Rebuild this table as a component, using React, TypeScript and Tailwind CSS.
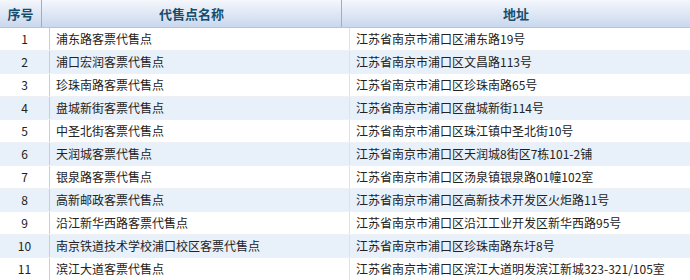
import React from "react";

const outlets = [
  { name: "浦东路客票代售点", addr: "江苏省南京市浦口区浦东路19号" },
  { name: "浦口宏润客票代售点", addr: "江苏省南京市浦口区文昌路113号" },
  { name: "珍珠南路客票代售点", addr: "江苏省南京市浦口区珍珠南路65号" },
  { name: "盘城新街客票代售点", addr: "江苏省南京市浦口区盘城新街114号" },
  { name: "中圣北街客票代售点", addr: "江苏省南京市浦口区珠江镇中圣北街10号" },
  { name: "天润城客票代售点", addr: "江苏省南京市浦口区天润城8街区7栋101-2铺" },
  { name: "银泉路客票代售点", addr: "江苏省南京市浦口区汤泉镇银泉路01幢102室" },
  { name: "高新邮政客票代售点", addr: "江苏省南京市浦口区高新技术开发区火炬路11号" },
  { name: "沿江新华西路客票代售点", addr: "江苏省南京市浦口区沿江工业开发区新华西路95号" },
  { name: "南京铁道技术学校浦口校区客票代售点", addr: "江苏省南京市浦口区珍珠南路东圩8号" },
  { name: "滨江大道客票代售点", addr: "江苏省南京市浦口区滨江大道明发滨江新城323-321/105室" },
];

function App() {
  return (
    <div
      className="w-[690px] h-[280px] overflow-hidden bg-white text-[#222]"
      style={{ fontFamily: '"Noto Sans CJK SC", "Liberation Sans", sans-serif' }}
    >
      {/* header */}
      <div className="flex h-[28px] bg-gradient-to-b from-[#f4f7fc] to-[#c9d8ee] border-b border-[#b9c3d1] text-[13px] font-bold text-[#174d6c]">
        <div className="w-[42px] flex items-center justify-center border-r border-[#a3acb9]">序号</div>
        <div className="w-[300px] flex items-center justify-center border-r border-[#a3acb9]">代售点名称</div>
        <div className="flex-1 flex items-center justify-center">地址</div>
      </div>
      {/* rows */}
      {outlets.map((o, i) => (
        <div
          key={i}
          className={
            "flex h-[23px] text-[12px] leading-none border-b border-[#edf1f5] " +
            (i % 2 === 1 ? "bg-[#e8f0f9]" : "bg-white")
          }
        >
          <div className="w-[50px] flex items-center justify-center border-r border-[#c9ced6]">{i + 1}</div>
          <div className="w-[300px] flex items-center pl-[6px] border-r border-[#dde2e8]">{o.name}</div>
          <div className="flex-1 flex items-center pl-[6px]">{o.addr}</div>
        </div>
      ))}
    </div>
  );
}

export default App;
